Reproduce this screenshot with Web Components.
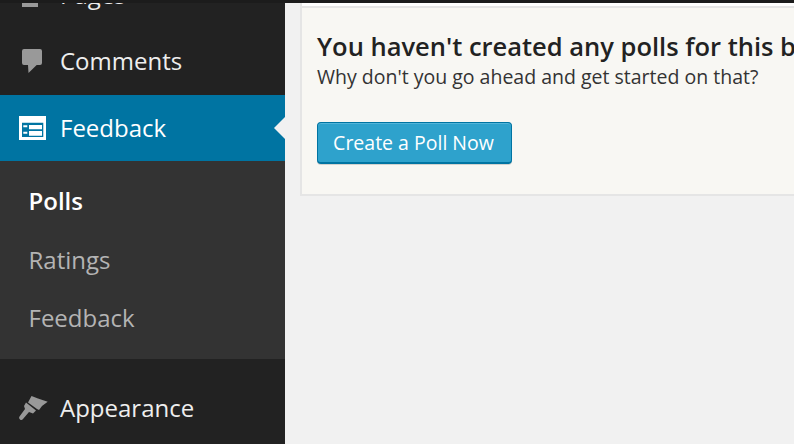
<!DOCTYPE html>
<html>
<head>
<meta charset="utf-8">
<title>Feedback</title>
<style>
  html, body { margin: 0; height: 100%; }
  body { font-family: "Open Sans", sans-serif; background: #f1f1f1; overflow: hidden; }
</style>
</head>
<body>
<admin-page>
  <admin-menu slot="side">
    <menu-item icon="pages">Pages</menu-item>
    <menu-item icon="comments" class="before-current">Comments</menu-item>
    <menu-item icon="feedback" current>Feedback</menu-item>
    <sub-menu>
      <sub-item current>Polls</sub-item>
      <sub-item>Ratings</sub-item>
      <sub-item>Feedback</sub-item>
    </sub-menu>
    <menu-item icon="appearance">Appearance</menu-item>
  </admin-menu>
  <poll-card>
    <span slot="title">You haven't created any polls for this blog.</span>
    <span slot="text">Why don't you go ahead and get started on that?</span>
    <poll-button>Create a Poll Now</poll-button>
  </poll-card>
</admin-page>

<script>
const html = String.raw;

// all icons share a 30x26 box, left edge at x=18, centred on the row
const icons = {
  pages: html`<path d="M4 2h16v23H4z"/>`,
  comments: html`<path d="M6 1h16a2 2 0 0 1 2 2v12a2 2 0 0 1-2 2h-3.300L10.500 25 10 17H6a2 2 0 0 1-2-2V3a2 2 0 0 1 2-2z"/>`,
  feedback: html`<path fill-rule="evenodd" d="M1 1h27v24H1z M4 7.700v14.300h21.300V7.700z M11 10h13v4.300H11z M11 16h13v4.700H11z M5.300 10.300h4v2h-4z M5.300 16.700h4v2h-4z"/>`,
  appearance: html`<path d="M13.500 1l6.500 2.500 9.700 3.200-5.700 4.300-3 4-2-1-9-6.500z M8 7.500l10 8-3 3-4-1.500-6 7a2 2 0 0 1-3.500-2.500l5.500-7.500-1-3z"/>`
};

class AdminPage extends HTMLElement {
  constructor() {
    super();
    this.attachShadow({ mode: "open" }).innerHTML = html`
      <style>
        :host { display: block; height: 444px; overflow: hidden; }
        .top { height: 3px; background: #1c1c1c; }
        .body { display: flex; height: 441px; }
        ::slotted([slot="side"]) { flex: 0 0 285px; }
        .main { flex: 1; min-width: 0; padding-left: 15px; }
      </style>
      <div class="top"></div>
      <div class="body">
        <slot name="side"></slot>
        <div class="main"><slot></slot></div>
      </div>
    `;
  }
}

class AdminMenu extends HTMLElement {
  constructor() {
    super();
    this.attachShadow({ mode: "open" }).innerHTML = html`
      <style>
        :host { display: block; background: #222; overflow: hidden; }
        .list { margin-top: -41px; }
      </style>
      <div class="list"><slot></slot></div>
    `;
  }
}

class MenuItem extends HTMLElement {
  constructor() {
    super();
    const icon = this.getAttribute("icon");
    this.attachShadow({ mode: "open" }).innerHTML = html`
      <style>
        :host { display: flex; align-items: center; position: relative; height: 66px; color: #eee; font-size: 24px; }
        :host(.before-current) { margin-bottom: 1px; }
        :host([current]) { background: #0074a2; color: #fff; }
        .icon { flex: 0 0 42px; padding-left: 18px; fill: #999; }
        :host([current]) .icon { fill: #fff; }
        .label { padding-bottom: 2px; }
        svg { display: block; }
        :host([current])::after {
          content: ""; position: absolute; right: 0; top: 50%; margin-top: -11.500px;
          border: 11.500px solid transparent; border-left-width: 0; border-right-color: #f1f1f1;
        }
      </style>
      <span class="icon"><svg width="30" height="26" viewBox="0 0 30 26">${icons[icon]}</svg></span>
      <span class="label"><slot></slot></span>
    `;
  }
}

class SubMenu extends HTMLElement {
  constructor() {
    super();
    this.attachShadow({ mode: "open" }).innerHTML = html`
      <style>
        :host { display: block; background: #333; padding: 10.500px 0 12px; margin-bottom: 16px; }
      </style>
      <slot></slot>
    `;
  }
}

class SubItem extends HTMLElement {
  constructor() {
    super();
    this.attachShadow({ mode: "open" }).innerHTML = html`
      <style>
        :host { display: flex; align-items: center; height: 58.500px; padding-left: 28.500px; color: #b4b4b4; font-size: 24px; }
        :host([current]) { color: #fff; font-weight: 600; }
      </style>
      <slot></slot>
    `;
  }
}

class PollCard extends HTMLElement {
  constructor() {
    super();
    this.attachShadow({ mode: "open" }).innerHTML = html`
      <style>
        :host { display: block; background: #f8f7f3; border-left: 2px solid #e5e5e5; width: 700px; }
        .sep { height: 3px; background: #fff; }
        .box { border-top: 2px solid #e5e5e5; border-bottom: 2px solid #e5e5e5; padding: 22px 15px 30px; }
        h2 { margin: 0; font-size: 25.500px; line-height: 33px; font-weight: 600; color: #222; white-space: nowrap; }
        p { margin: 0 0 32px; font-size: 19.500px; line-height: 27px; color: #333; white-space: nowrap; }
      </style>
      <div class="sep"></div>
      <div class="box">
        <h2><slot name="title"></slot></h2>
        <p><slot name="text"></slot></p>
        <slot></slot>
      </div>
    `;
  }
}

class PollButton extends HTMLElement {
  constructor() {
    super();
    this.attachShadow({ mode: "open" }).innerHTML = html`
      <style>
        :host {
          display: inline-flex; align-items: center; justify-content: center; box-sizing: border-box;
          width: 195px; height: 42px; background: #2ea2cc; color: #fff; font-size: 19.500px;
          border: 1px solid #0074a2; border-bottom-width: 2px; border-radius: 4px; padding-right: 2px;
          box-shadow: inset 0 1px 0 rgba(120,200,230,.5), 0 1px 0 rgba(0,0,0,.15);
        }
      </style>
      <slot></slot>
    `;
  }
}

customElements.define("admin-page", AdminPage);
customElements.define("admin-menu", AdminMenu);
customElements.define("menu-item", MenuItem);
customElements.define("sub-menu", SubMenu);
customElements.define("sub-item", SubItem);
customElements.define("poll-card", PollCard);
customElements.define("poll-button", PollButton);
</script>
</body>
</html>
